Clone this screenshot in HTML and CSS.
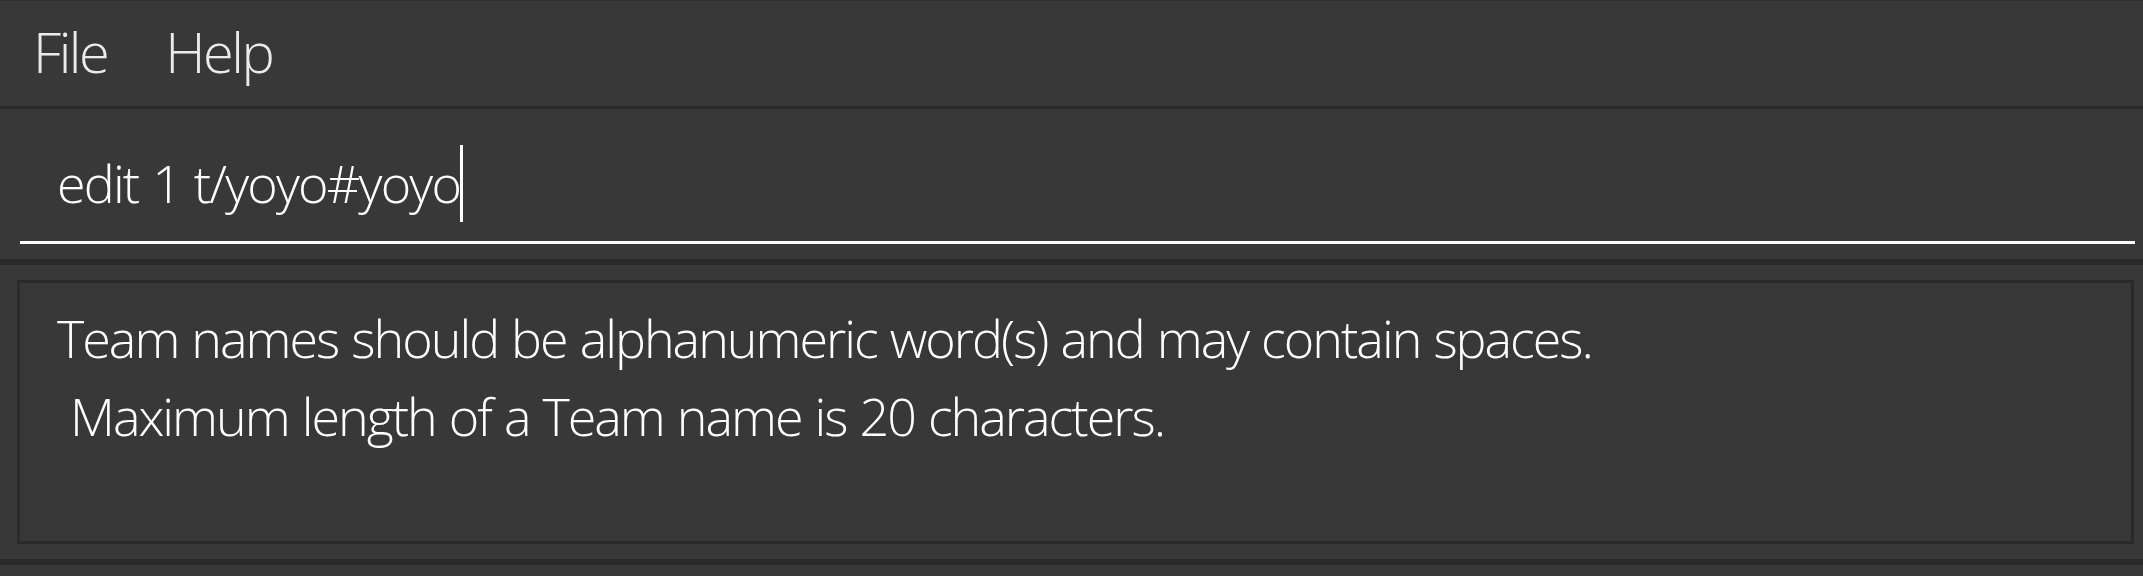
FILE: index.html
```html
<!DOCTYPE html>
<html lang="en">
<head>
<meta charset="utf-8">
<title>Team App</title>
<link rel="stylesheet" href="styles.css">
</head>
<body>
<div class="window">
  <div class="menubar">
    <span class="menu menu-file">File</span>
    <span class="menu menu-help">Help</span>
  </div>
  <div class="command-pane">
    <div class="command-field"><span class="cmd-text">edit 1 t/yoyo#yoyo</span><span class="caret"></span></div>
  </div>
  <div class="result-pane">
    <div class="result-box">
      <div class="result-line">Team names should be alphanumeric word(s) and may contain spaces.</div>
      <div class="result-line"> Maximum length of a Team name is 20 characters.</div>
    </div>
  </div>
  <div class="bottom-pane"></div>
</div>
</body>
</html>
```

FILE: styles.css
```css
html, body {
  margin: 0;
  padding: 0;
  background: #383838;
}

.window {
  width: 2143px;
  height: 576px;
  overflow: hidden;
  background: #383838;
  font-family: "Open Sans", "Noto Sans", "Liberation Sans", sans-serif;
  font-weight: 300;
  color: #ffffff;
}

.menubar {
  box-sizing: border-box;
  height: 106px;
  border-top: 1px solid #303030;
  display: flex;
  align-items: flex-start;
  padding-top: 12px;
  padding-left: 33px;
  gap: 58px;
}

.menu {
  font-size: 56px;
  line-height: 76px;
  color: rgba(255, 255, 255, 0.9);
  letter-spacing: -2.5px;
}

.command-pane {
  border-top: 3px solid #2a2a2a;
  padding: 34px 8px 15px 20px;
}

.command-field {
  padding-left: 37px;
  padding-bottom: 18px;
  border-bottom: 3px solid #ffffff;
  font-size: 52px;
  line-height: 80px;
  white-space: pre;
}

.cmd-text {
  letter-spacing: -1.8px;
  word-spacing: 2px;
}

.caret {
  display: inline-block;
  width: 3px;
  height: 77px;
  margin-left: 0;
  background: #ffffff;
  vertical-align: -19px;
}

.result-pane {
  border-top: 6px solid #2a2a2a;
  border-bottom: 6px solid #2a2a2a;
  padding: 15px 9px 15px 17px;
}

.result-box {
  box-sizing: border-box;
  height: 264px;
  border: 3px solid #2a2a2a;
  padding: 16px 0 0 37px;
}

.result-line {
  font-size: 52px;
  line-height: 78px;
  letter-spacing: -2px;
  word-spacing: 1.5px;
  white-space: pre;
}

.bottom-pane {
  height: 11px;
  background: #383838;
}
```
